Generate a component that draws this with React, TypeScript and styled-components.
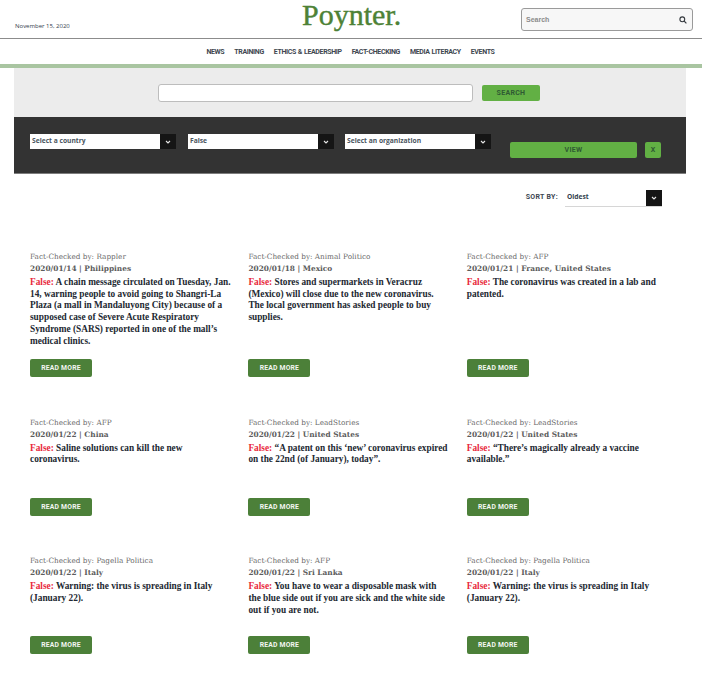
import React from "react";
import styled, { createGlobalStyle } from "styled-components";

const GlobalStyle = createGlobalStyle`
  html, body {
    margin: 0;
    padding: 0;
    background: #fff;
    overflow: hidden;
  }
  * {
    box-sizing: border-box;
  }
`;

const Page = styled.div`
  width: 702px;
  height: 674px;
  overflow: hidden;
  font-family: "Liberation Sans", Arial, sans-serif;
`;

const TopBar = styled.header`
  height: 39px;
  border-bottom: 1px solid #8c8c8c;
  display: grid;
  grid-template-columns: 287px auto 1fr;
  align-items: start;
  padding: 0 9px 0 15px;
`;

const DateText = styled.div`
  font-family: "Open Sans", sans-serif;
  font-size: 6px;
  font-weight: 500;
  color: #33424d;
  padding-top: 22px;
`;

const Logo = styled.div`
  font-family: "Liberation Serif", serif;
  font-size: 30px;
  line-height: 30px;
  color: #4d8236;
  -webkit-text-stroke: 0.4px #4d8236;
`;

const TopSearch = styled.div`
  justify-self: end;
  width: 172px;
  height: 23px;
  margin-top: 8px;
  border: 1px solid #9a9a9a;
  border-radius: 3px;
  background: #f7f7f7;
  display: flex;
  align-items: center;
  justify-content: space-between;
  padding: 0 5px 0 4px;
  font-size: 7px;
  font-weight: 700;
  color: #8b8b8b;
`;

const Nav = styled.nav`
  height: 25px;
  display: flex;
  justify-content: center;
  align-items: center;
  gap: 10px;
  padding-right: 1px;
`;

const NavItem = styled.span`
  font-family: "Roboto", sans-serif;
  font-size: 7px;
  font-weight: 700;
  letter-spacing: -0.35px;
  word-spacing: 0.5px;
  color: #3f4750;
`;

const GreenRule = styled.div`
  height: 4px;
  background: #a9c5a1;
`;

const Filters = styled.section`
  margin: 0 16px 0 14px;
`;

const SearchPanel = styled.div`
  height: 49px;
  background: #ececec;
  display: flex;
  align-items: flex-start;
  padding: 16px 0 0 144px;
  gap: 9px;
`;

const SearchInput = styled.div`
  width: 315px;
  height: 18px;
  border: 1px solid #bdbdbd;
  border-radius: 3px;
  background: #fff;
`;

const GreenButton = styled.button<{ $width: number; $height: number }>`
  width: ${(p) => p.$width}px;
  height: ${(p) => p.$height}px;
  padding: 0;
  border: 0;
  border-radius: 2px;
  background: #62b044;
  color: #2f5a33;
  font-family: "Roboto", sans-serif;
  font-size: 7px;
  font-weight: 700;
  letter-spacing: 0.3px;
`;

const SearchButton = styled(GreenButton)`
  margin-top: 1px;
`;

const DarkPanel = styled.div`
  height: 57px;
  background: #333;
  border-bottom: 1px solid #7d7d7d;
  display: flex;
  align-items: flex-start;
  padding: 17px 0 0 16px;
`;

const SelectBox = styled.div<{ $width: number; $gap: number }>`
  width: ${(p) => p.$width}px;
  height: 15px;
  margin-right: ${(p) => p.$gap}px;
  display: flex;
  background: #fff;
  font-family: "Open Sans", sans-serif;
  font-size: 6.7px;
  font-weight: 700;
  color: #4a5560;
`;

const SelectText = styled.span`
  flex: 1;
  padding-left: 2px;
  line-height: 14px;
`;

const Caret = styled.span<{ $size: number; $height?: number }>`
  width: ${(p) => p.$size}px;
  height: ${(p) => p.$height ?? p.$size}px;
  background: #151515;
  display: flex;
  align-items: center;
  justify-content: center;
`;

const ViewGroup = styled.div`
  display: flex;
  gap: 8px;
  margin-top: 8px;
`;

const SortRow = styled.div`
  height: 33px;
  margin-top: 16px;
  padding-right: 24px;
  display: flex;
  justify-content: flex-end;
  align-items: flex-start;
`;

const SortLabel = styled.span`
  font-family: "Roboto", sans-serif;
  font-size: 7px;
  font-weight: 700;
  letter-spacing: 0.3px;
  color: #3c4650;
  line-height: 14px;
  margin-right: 7px;
`;

const SortSelect = styled.div`
  width: 97px;
  height: 17px;
  display: flex;
  border-bottom: 1px solid #d6d6d6;
  font-family: "Open Sans", sans-serif;
  font-size: 6.7px;
  font-weight: 700;
  color: #33424d;
`;

const SortText = styled.span`
  flex: 1;
  padding-left: 2px;
  line-height: 14px;
`;

const Grid = styled.main`
  margin-top: 28px;
  padding-left: 30px;
  display: grid;
  grid-template-columns: repeat(3, 218.4px);
  row-gap: 39.5px;
`;

const Card = styled.article`
  display: flex;
  flex-direction: column;
  align-items: flex-start;
`;

const Checked = styled.div`
  font-family: "DejaVu Serif", serif;
  font-size: 7.3px;
  line-height: 12px;
  color: #6a6a6a;
`;

const Meta = styled.div`
  font-family: "DejaVu Serif", serif;
  font-size: 7.4px;
  font-weight: 700;
  line-height: 12px;
  color: #5c5c5c;
`;

const Claim = styled.p`
  margin: 2px 0 12px;
  width: 202px;
  min-height: 43px;
  flex: 1;
  font-family: "Liberation Serif", serif;
  font-size: 9.3px;
  font-weight: 700;
  line-height: 11.7px;
  color: #222831;
`;

const Rating = styled.span`
  color: #e8293c;
`;

const ReadMore = styled.button`
  width: 62px;
  height: 18px;
  padding: 0;
  border: 0;
  border-radius: 2px;
  background: #4c8039;
  color: #f3f6f1;
  font-family: "Roboto", sans-serif;
  font-size: 6.8px;
  font-weight: 700;
  letter-spacing: 0.2px;
`;

const Chevron = () => (
  <svg width="6" height="4" viewBox="0 0 6 4" fill="none">
    <path d="M1 1l2 2 2-2" stroke="#e6e6e6" strokeWidth="1.1" />
  </svg>
);

const SearchIcon = () => (
  <svg width="8" height="8" viewBox="0 0 8 8" fill="none">
    <circle cx="3.3" cy="3.3" r="2.4" stroke="#33383d" strokeWidth="1.1" />
    <path d="M5.2 5.2L7.4 7.4" stroke="#33383d" strokeWidth="1.2" />
  </svg>
);

const navItems = [
  "NEWS",
  "TRAINING",
  "ETHICS & LEADERSHIP",
  "FACT-CHECKING",
  "MEDIA LITERACY",
  "EVENTS",
];

const selects = [
  { label: "Select a country", width: 146, gap: 12 },
  { label: "False", width: 146, gap: 11 },
  { label: "Select an organization", width: 146, gap: 19 },
];

const checks = [
  {
    by: "Rappler",
    meta: "2020/01/14 | Philippines",
    claim:
      "A chain message circulated on Tuesday, Jan. 14, warning people to avoid going to Shangri-La Plaza (a mall in Mandaluyong City) because of a supposed case of Severe Acute Respiratory Syndrome (SARS) reported in one of the mall’s medical clinics.",
  },
  {
    by: "Animal Politico",
    meta: "2020/01/18 | Mexico",
    claim:
      "Stores and supermarkets in Veracruz (Mexico) will close due to the new coronavirus. The local government has asked people to buy supplies.",
  },
  {
    by: "AFP",
    meta: "2020/01/21 | France, United States",
    claim: "The coronavirus was created in a lab and patented.",
  },
  {
    by: "AFP",
    meta: "2020/01/22 | China",
    claim: "Saline solutions can kill the new coronavirus.",
  },
  {
    by: "LeadStories",
    meta: "2020/01/22 | United States",
    claim: "“A patent on this ‘new’ coronavirus expired on the 22nd (of January), today”.",
  },
  {
    by: "LeadStories",
    meta: "2020/01/22 | United States",
    claim: "“There’s magically already a vaccine available.”",
  },
  {
    by: "Pagella Politica",
    meta: "2020/01/22 | Italy",
    claim: "Warning: the virus is spreading in Italy (January 22).",
  },
  {
    by: "AFP",
    meta: "2020/01/22 | Sri Lanka",
    claim:
      "You have to wear a disposable mask with the blue side out if you are sick and the white side out if you are not.",
  },
  {
    by: "Pagella Politica",
    meta: "2020/01/22 | Italy",
    claim: "Warning: the virus is spreading in Italy (January 22).",
  },
];

const App = () => (
  <Page>
    <GlobalStyle />
    <TopBar>
      <DateText>November 15, 2020</DateText>
      <Logo>Poynter.</Logo>
      <TopSearch>
        <span>Search</span>
        <SearchIcon />
      </TopSearch>
    </TopBar>
    <Nav>
      {navItems.map((item) => (
        <NavItem key={item}>{item}</NavItem>
      ))}
    </Nav>
    <GreenRule />
    <Filters>
      <SearchPanel>
        <SearchInput />
        <SearchButton $width={58} $height={16}>
          SEARCH
        </SearchButton>
      </SearchPanel>
      <DarkPanel>
        {selects.map((s) => (
          <SelectBox key={s.label} $width={s.width} $gap={s.gap}>
            <SelectText>{s.label}</SelectText>
            <Caret $size={16} $height={15}>
              <Chevron />
            </Caret>
          </SelectBox>
        ))}
        <ViewGroup>
          <GreenButton $width={127} $height={16}>
            VIEW
          </GreenButton>
          <GreenButton $width={16} $height={16}>
            X
          </GreenButton>
        </ViewGroup>
      </DarkPanel>
      <SortRow>
        <SortLabel>SORT BY:</SortLabel>
        <SortSelect>
          <SortText>Oldest</SortText>
          <Caret $size={16}>
            <Chevron />
          </Caret>
        </SortSelect>
      </SortRow>
    </Filters>
    <Grid>
      {checks.map((c, i) => (
        <Card key={i}>
          <Checked>Fact-Checked by: {c.by}</Checked>
          <Meta>{c.meta}</Meta>
          <Claim>
            <Rating>False:</Rating> {c.claim}
          </Claim>
          <ReadMore>READ MORE</ReadMore>
        </Card>
      ))}
    </Grid>
  </Page>
);

export default App;
